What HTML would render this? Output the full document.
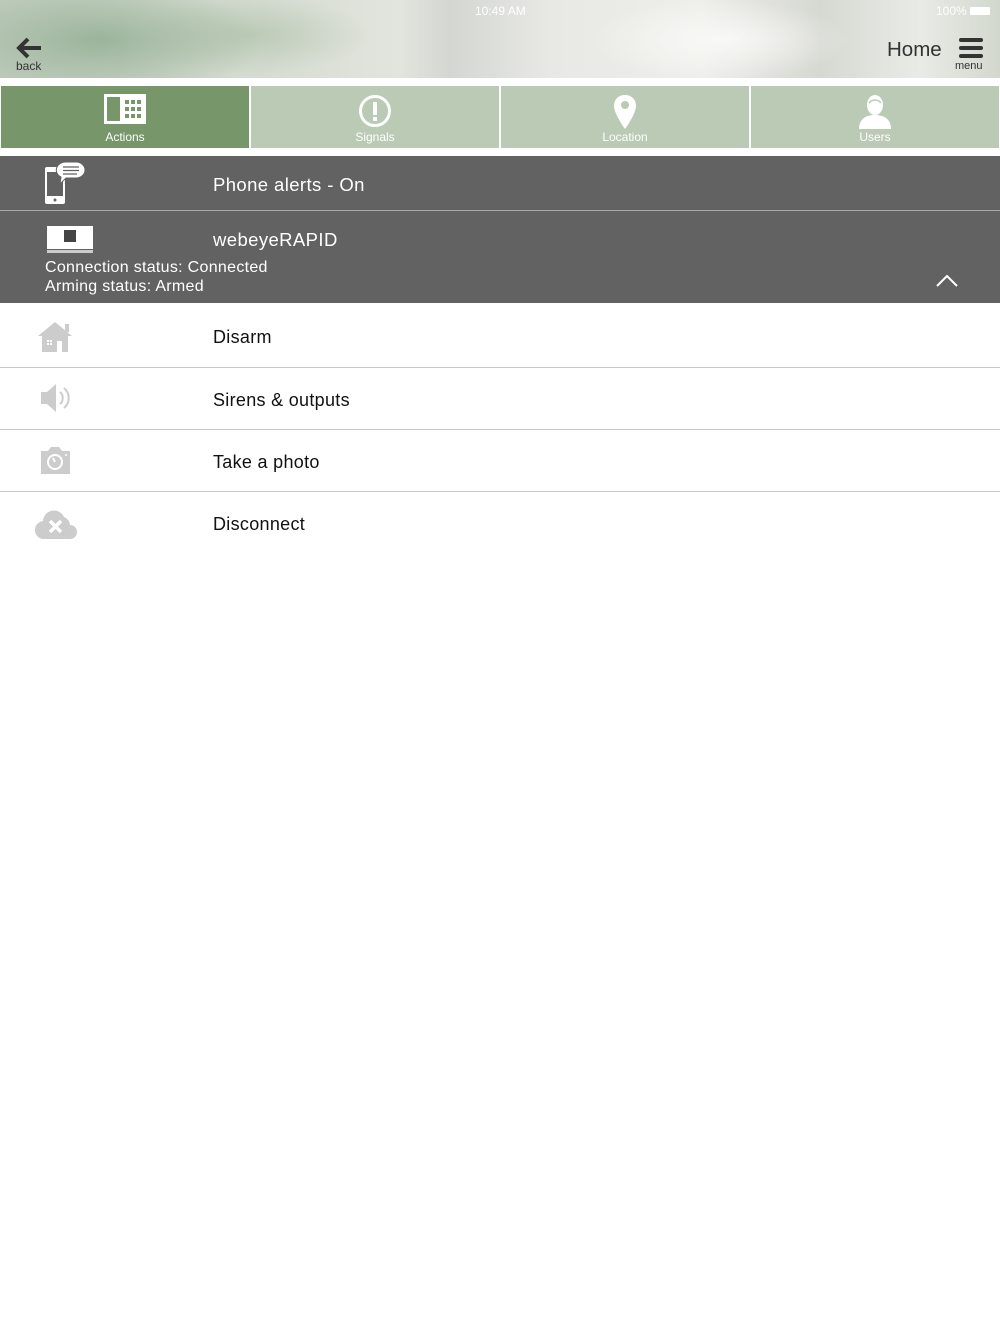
<!DOCTYPE html>
<html><head><meta charset="utf-8"><style>
*{margin:0;padding:0;box-sizing:border-box}
body{width:1000px;height:1334px;background:#fff;font-family:"Liberation Sans",Helvetica,Arial,sans-serif;position:relative;overflow:hidden}
.hdr{position:absolute;left:0;top:0;width:1000px;height:78px;
background:
radial-gradient(ellipse 160px 60px at 100px 40px,rgba(140,170,140,.75),transparent),
radial-gradient(ellipse 120px 40px at 250px 35px,rgba(170,190,165,.6),transparent),
radial-gradient(ellipse 130px 40px at 720px 40px,rgba(250,250,248,.9),transparent),
linear-gradient(90deg,#c0ccbe 0%,#d0d8cc 20%,#e2e5de 40%,#d4d6d1 45%,#e8e9e5 55%,#eeeeea 70%,#d6d8d2 82%,#e9ebe6 92%,#d2d8ce 100%)}
.abs{position:absolute}
.tab{position:absolute;top:86px;width:248px;height:62px;background:#bacab4;color:#fff;font-size:12px;text-align:center}
.tab span{position:absolute;left:0;right:0;top:44px}
.tab svg{position:absolute;left:50%;transform:translateX(-50%);top:8px}
.gray{position:absolute;left:0;width:1000px;background:#626262;color:#fff}
.row{position:absolute;left:0;width:1000px;height:62px;border-bottom:1px solid #c8c8c8}
.row .t{position:absolute;left:213px;top:22px;font-size:18px;color:#111;letter-spacing:0.3px}
.big{font-size:18.5px;letter-spacing:0.4px}
</style></head><body>
<div class="hdr"></div>
<div class="abs" style="left:475px;top:4px;font-size:12px;color:#fff">10:49 AM</div>
<div class="abs" style="left:936px;top:4px;font-size:12px;color:#fff">100%</div>
<div class="abs" style="left:970px;top:7px;width:20px;height:8px;background:#fff;border-radius:1px"></div>
<svg class="abs" style="left:16px;top:37px" width="26" height="22" viewBox="0 0 26 22"><path d="M12 2 L3 11 L12 20 M3 11 H25" stroke="#333" stroke-width="4" fill="none"/></svg>
<div class="abs" style="left:16px;top:59px;font-size:12px;color:#333">back</div>
<div class="abs" style="left:887px;top:38px;font-size:20.5px;color:#333">Home</div>
<div class="abs" style="left:959px;top:38px;width:24px;height:4px;background:#333;border-radius:2px;box-shadow:0 8px 0 #333,0 16px 0 #333"></div>
<div class="abs" style="left:955px;top:60px;font-size:11px;color:#333">menu</div>

<div class="tab" style="left:1px;background:#77966a"><svg width="42" height="30" viewBox="0 0 42 30"><rect x="0" y="0" width="42" height="30" fill="#fff"/><rect x="3" y="3" width="13" height="24" fill="#77966a"/><g fill="#77966a"><rect x="21" y="6" width="4" height="4"/><rect x="27" y="6" width="4" height="4"/><rect x="33" y="6" width="4" height="4"/><rect x="21" y="13" width="4" height="4"/><rect x="27" y="13" width="4" height="4"/><rect x="33" y="13" width="4" height="4"/><rect x="21" y="20" width="4" height="4"/><rect x="27" y="20" width="4" height="4"/><rect x="33" y="20" width="4" height="4"/></g></svg><span>Actions</span></div>
<div class="tab" style="left:251px"><svg width="34" height="34" viewBox="0 0 34 34"><circle cx="17" cy="17" r="14.5" stroke="#fff" stroke-width="3" fill="none"/><rect x="15" y="8" width="4" height="13" fill="#fff"/><rect x="15" y="23" width="4" height="4" fill="#fff"/></svg><span>Signals</span></div>
<div class="tab" style="left:501px"><svg width="24" height="36" viewBox="0 0 24 36"><path d="M12 1C5 1 1 6 1 12c0 8 11 23 11 23s11-15 11-23C23 6 19 1 12 1z" fill="#fff"/><circle cx="12" cy="11" r="4" fill="#bacab4"/></svg><span>Location</span></div>
<div class="tab" style="left:751px"><svg width="34" height="36" viewBox="0 0 34 36"><ellipse cx="17" cy="11" rx="8" ry="10" fill="#fff"/><path d="M1 35c0-10 7-14 16-14s16 4 16 14z" fill="#fff"/><path d="M11 9c3-4 9-4 12 0" stroke="#bacab4" stroke-width="1.5" fill="none"/></svg><span>Users</span></div>

<div class="gray" style="top:156px;height:54px">
<svg class="abs" style="left:44px;top:5px" width="42" height="44" viewBox="0 0 42 44"><rect x="1" y="6" width="20" height="37" rx="2" fill="#fff"/><rect x="3" y="11" width="16" height="24" fill="#626262"/><circle cx="11" cy="39" r="1.5" fill="#626262"/><path d="M22 1h10a9 8 0 0 1 0 16h-10l-6 6 1-7a9 8 0 0 1 5-15z" fill="#fff" stroke="#626262" stroke-width="1"/><path d="M19 6h16M19 9.5h16M19 13h14" stroke="#626262" stroke-width="1.3"/></svg>
<div class="abs big" style="left:213px;top:18px">Phone alerts - On</div>
</div>
<div style="position:absolute;top:210px;left:0;width:1000px;height:1px;background:#aaa"></div>
<div class="gray" style="top:211px;height:92px">
<svg class="abs" style="left:47px;top:15px" width="46" height="27" viewBox="0 0 46 27"><rect x="0" y="0" width="46" height="23" fill="#fff"/><rect x="17" y="4" width="12" height="12" fill="#444"/><rect x="0" y="24" width="46" height="3" fill="#ccc"/></svg>
<div class="abs big" style="left:213px;top:18px">webeyeRAPID</div>
<div class="abs" style="left:45px;top:47px;font-size:16px;line-height:19px;letter-spacing:0.3px">Connection status: Connected<br>Arming status: Armed</div>
<svg class="abs" style="left:936px;top:64px" width="22" height="12" viewBox="0 0 22 12"><path d="M1 11 L11 1 L21 11" stroke="#fff" stroke-width="2" fill="none"/></svg>
</div>

<div class="row" style="top:303px;height:65px">
<svg class="abs" style="left:37px;top:18px" width="36" height="32" viewBox="0 0 36 32"><path d="M18 1 L1 15 H35 Z" fill="#ccc"/><rect x="28" y="3" width="4" height="8" fill="#ccc"/><rect x="5" y="15" width="26" height="16" fill="#ccc"/><rect x="20" y="20" width="5" height="11" fill="#fff"/><g fill="#fff"><rect x="10" y="19" width="2" height="2"/><rect x="13" y="19" width="2" height="2"/><rect x="10" y="22" width="2" height="2"/><rect x="13" y="22" width="2" height="2"/></g></svg>
<div class="t" style="top:24px">Disarm</div></div>
<div class="row" style="top:368px;height:62px">
<svg class="abs" style="left:40px;top:15px" width="32" height="30" viewBox="0 0 32 30"><path d="M1 9h6l9-8v28l-9-8H1z" fill="#ccc"/><path d="M20 9a8 8 0 0 1 0 12M24 5a13 13 0 0 1 0 20" stroke="#ccc" stroke-width="2" fill="none"/></svg>
<div class="t">Sirens &amp; outputs</div></div>
<div class="row" style="top:430px;height:62px">
<svg class="abs" style="left:40px;top:16px" width="31" height="29" viewBox="0 0 31 29"><path d="M1 5h7l3-4h8l3 4h8v23H1z" fill="#ccc"/><circle cx="15" cy="16" r="7" stroke="#fff" stroke-width="2" fill="none"/><path d="M15 16 L13 12" stroke="#fff" stroke-width="2"/><circle cx="26" cy="9" r="1" fill="#fff"/></svg>
<div class="t">Take a photo</div></div>
<div class="row" style="top:492px;height:63px;border-bottom:none">
<svg class="abs" style="left:35px;top:16px" width="42" height="32" viewBox="0 0 42 32"><path d="M10 31a9 9 0 0 1-2-18a11 11 0 0 1 21-4a9 9 0 0 1 6 8a7 7 0 0 1 0 14z" fill="#ccc"/><path d="M15 13l11 11M26 13L15 24" stroke="#fff" stroke-width="3.5"/></svg>
<div class="t">Disconnect</div></div>
</body></html>
